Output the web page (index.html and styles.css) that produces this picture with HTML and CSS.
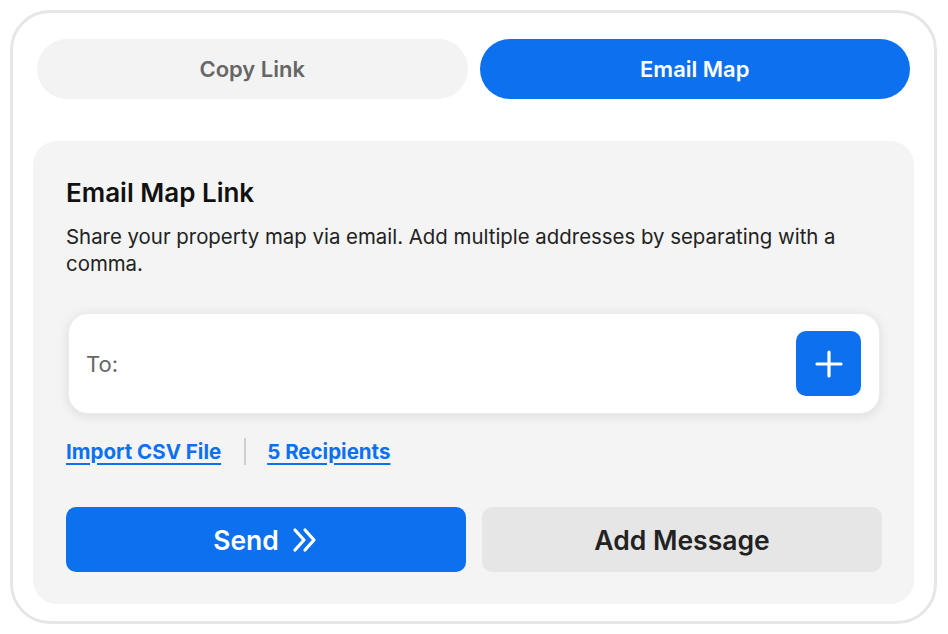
FILE: index.html
```html
<!DOCTYPE html>
<html lang="en">
<head>
    <meta charset="UTF-8">
    <meta name="viewport" content="width=device-width, initial-scale=1.0">
    <title>Share Map</title>
    <link rel="stylesheet" href="styles.css">
</head>
<body>
    <div class="share-card">
        <!-- Tabs -->
        <div class="tabs">
            <button class="tab">Copy Link</button>
            <button class="tab active">Email Map</button>
        </div>

        <!-- Email panel -->
        <div class="panel">
            <h2 class="panel-title">Email Map Link</h2>
            <p class="panel-desc">Share your property map via email. Add multiple addresses by separating with a comma.</p>

            <div class="to-field">
                <span class="to-label">To:</span>
                <input type="text" class="to-input">
                <button class="add-btn" aria-label="Add recipient">
                    <svg width="30" height="30" viewBox="0 0 30 30">
                        <path d="M15 3v24M3 15h24" stroke="#fff" stroke-width="3.2" stroke-linecap="round" fill="none"/>
                    </svg>
                </button>
            </div>

            <div class="links">
                <a href="#" class="link">Import CSV File</a>
                <span class="divider"></span>
                <a href="#" class="link">5 Recipients</a>
            </div>

            <div class="actions">
                <button class="btn btn-send">
                    Send
                    <svg width="28" height="26" viewBox="0 0 28 26">
                        <path d="M4 3l9 10-9 10M14 3l9 10-9 10" stroke="#fff" stroke-width="3.2" stroke-linecap="round" stroke-linejoin="round" fill="none"/>
                    </svg>
                </button>
                <button class="btn btn-message">Add Message</button>
            </div>
        </div>
    </div>
</body>
</html>
```

FILE: styles.css
```css
body {
    margin: 0;
    padding: 10px;
    font-family: Inter, "Noto Sans", sans-serif;
    background: #fff;
}
.share-card {
    width: 927px;
    height: 614px;
    box-sizing: border-box;
    border: 3px solid #e6e6e6;
    border-radius: 40px;
    padding: 26px 20px 16px 20px;
    background: #fff;
}
.tabs {
    display: flex;
    gap: 12px;
    padding: 0 4px;
}
.tab {
    flex: 1;
    height: 60px;
    border: none;
    border-radius: 30px;
    background: #f3f3f3;
    color: #666;
    font-family: inherit;
    font-size: 22px;
    font-weight: 600;
    cursor: pointer;
}
.tab.active {
    background: #0d70ef;
    color: #fff;
}
.panel {
    margin-top: 42px;
    background: #f4f4f4;
    border-radius: 24px;
    padding: 33px 32px 32px 33px;
}
.panel-title {
    margin: 0;
    font-size: 26px;
    font-weight: 600;
    line-height: 38px;
    color: #111;
}
.panel-desc {
    margin: 11px 0 0;
    font-size: 20.4px;
    line-height: 27px;
    color: #222;
    padding-right: 30px;
}
.to-field {
    display: flex;
    align-items: center;
    margin: 36px 2px 0;
    height: 101px;
    box-sizing: border-box;
    padding: 0 18px 0 17px;
    background: #fff;
    border-radius: 20px;
    box-shadow: 0 2px 12px rgba(0, 0, 0, 0.10);
    border: 1px solid #ececec;
}
.to-label {
    font-size: 22px;
    color: #666;
}
.to-input {
    flex: 1;
    border: none;
    outline: none;
    font-family: inherit;
    font-size: 22px;
    margin: 0 10px;
    background: transparent;
}
.add-btn {
    width: 65px;
    height: 65px;
    border: none;
    border-radius: 10px;
    background: #0d70ef;
    display: flex;
    align-items: center;
    justify-content: center;
    cursor: pointer;
}
.links {
    display: flex;
    align-items: center;
    margin-top: 22px;
    height: 30px;
}
.link {
    font-size: 20.5px;
    font-weight: 700;
    color: #0d70ef;
    text-decoration: underline;
    text-underline-offset: 4px;
    text-decoration-thickness: 2px;
}
.divider {
    width: 2px;
    height: 27px;
    background: #cfcfcf;
    margin: 0 21px 0 23px;
}
.actions {
    display: flex;
    gap: 16px;
    margin-top: 41px;
}
.btn {
    flex: 1;
    height: 65px;
    border: none;
    border-radius: 10px;
    font-family: inherit;
    font-size: 26.5px;
    font-weight: 600;
    display: flex;
    align-items: center;
    justify-content: center;
    gap: 12px;
    cursor: pointer;
}
.btn-send {
    background: #0d70ef;
    color: #fff;
}
.btn-message {
    background: #e6e6e6;
    color: #222;
}
```
